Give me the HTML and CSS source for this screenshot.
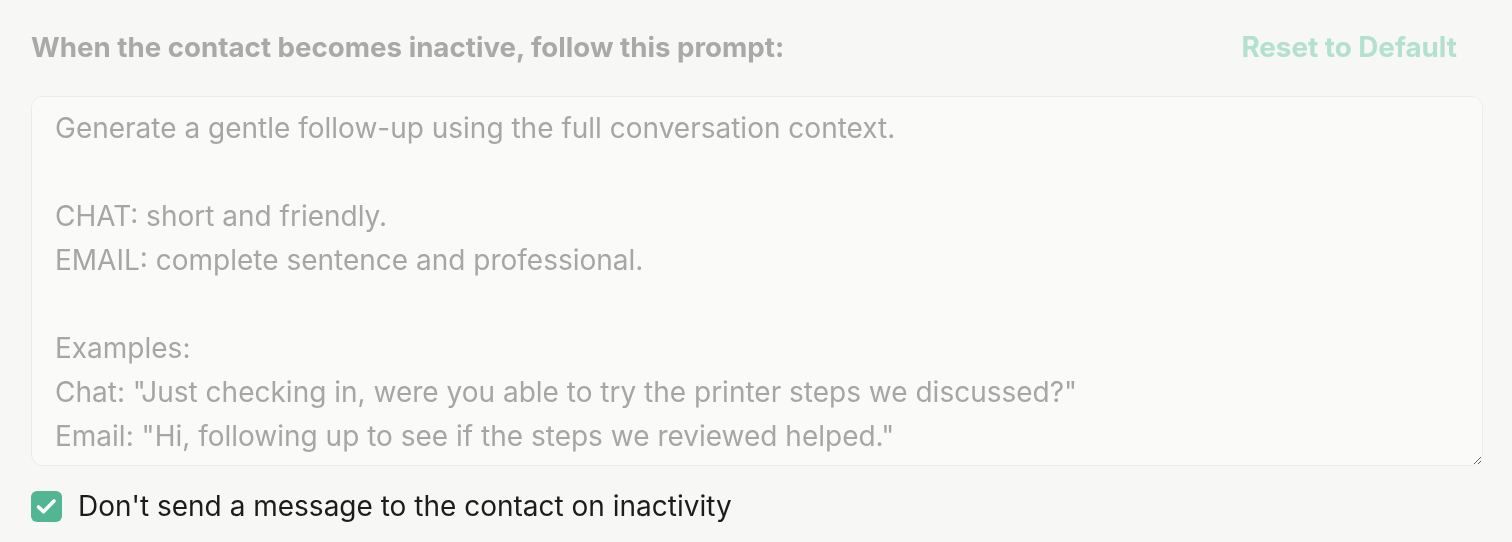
FILE: index.html
```html
<!DOCTYPE html>
<html lang="en">
<head>
    <meta charset="UTF-8">
    <meta name="viewport" content="width=device-width, initial-scale=1.0">
    <title>Inactivity Prompt</title>
    <link rel="stylesheet" href="styles.css">
</head>
<body>
    <div class="panel">
        <div class="panel-header">
            <label class="prompt-label" for="prompt">When the contact becomes inactive, follow this prompt:</label>
            <button class="reset-btn" type="button">Reset to Default</button>
        </div>

        <textarea id="prompt" class="prompt-box" readonly>Generate a gentle follow-up using the full conversation context.

CHAT: short and friendly.
EMAIL: complete sentence and professional.

Examples:
Chat: "Just checking in, were you able to try the printer steps we discussed?"
Email: "Hi, following up to see if the steps we reviewed helped."</textarea>

        <label class="check-row">
            <span class="check-box">
                <svg width="31" height="31" viewBox="0 0 31 31" fill="none">
                    <path d="M7.5 16l5 4.8 10.5-10.8" stroke="#fff" stroke-width="3.6" stroke-linecap="round" stroke-linejoin="round"/>
                </svg>
            </span>
            <span class="check-text">Don't send a message to the contact on inactivity</span>
        </label>
    </div>
</body>
</html>
```

FILE: styles.css
```css
body {
    margin: 0;
    background: #f7f7f5;
    font-family: Inter, "Noto Sans", sans-serif;
}
.panel {
    padding: 28px 29px 0 31px;
}
.panel-header {
    display: flex;
    justify-content: space-between;
    align-items: center;
    height: 38px;
}
.prompt-label {
    font-size: 27.7px;
    font-weight: 700;
    color: #a9a9a7;
}
.reset-btn {
    background: none;
    border: none;
    padding: 0 26px 0 0;
    font-family: inherit;
    font-size: 27.8px;
    font-weight: 700;
    color: #b4e0cf;
    cursor: pointer;
}
.prompt-box {
    display: block;
    box-sizing: border-box;
    width: 100%;
    height: 370px;
    margin-top: 30px;
    padding: 9px 23px 8px;
    background: #fafaf8;
    border: 1.5px solid #ebebe9;
    border-radius: 12px;
    font-family: inherit;
    font-size: 28px;
    line-height: 44px;
    color: #a6a6a4;
    resize: vertical;
    outline: none;
}
.check-row {
    display: flex;
    align-items: center;
    gap: 16px;
    margin-top: 23px;
    cursor: pointer;
}
.check-box {
    display: flex;
    width: 31px;
    height: 31px;
    border-radius: 6px;
    background: #52b593;
}
.check-text {
    font-size: 28px;
    color: #1c1c1c;
}
```
